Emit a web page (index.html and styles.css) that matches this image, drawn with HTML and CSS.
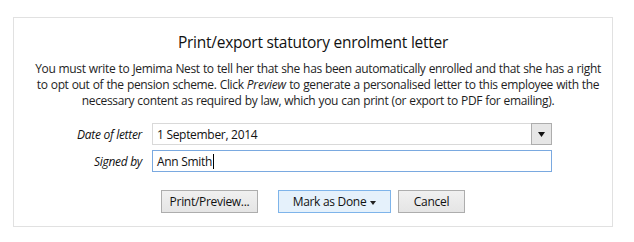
FILE: index.html
```html
<!DOCTYPE html>
<html>
<head>
<meta charset="utf-8">
<link rel="stylesheet" href="styles.css">
</head>
<body>
<div class="panel">
  <h1 class="title">Print/export statutory enrolment letter</h1>
  <p class="intro">You must write to Jemima Nest to tell her that she has been automatically enrolled and that she has a right to opt out of the pension scheme. Click <em>Preview</em> to generate a personalised letter to this employee with the necessary content as required by law, which you can print (or export to PDF for emailing).</p>
  <div class="form">
    <label class="label">Date of letter</label>
    <div class="field select">
      <span class="value">1 September, 2014</span>
      <span class="drop"><svg width="7" height="5" viewBox="0 0 7 5"><path d="M0 0H7L3.5 5Z" fill="#111"/></svg></span>
    </div>
    <label class="label">Signed by</label>
    <div class="field input focus">
      <span class="value">Ann Smith</span><span class="caret"></span>
    </div>
  </div>
  <div class="actions">
    <button class="btn btn-print">Print/Preview...</button>
    <button class="btn btn-primary btn-done">Mark as Done <svg class="arrow" width="6" height="4" viewBox="0 0 6 4"><path d="M0 0H6L3 4Z" fill="#222"/></svg></button>
    <button class="btn btn-cancel">Cancel</button>
  </div>
</div>
</body>
</html>
```

FILE: styles.css
```css
* { box-sizing: border-box; }
html, body { margin: 0; padding: 0; background: #fff; }
body {
  font-family: "Open Sans", "Noto Sans", sans-serif;
  color: #1e1e1e;
}
.panel {
  margin: 17px 0 0 13px;
  width: 600px;
  border: 1px solid #e1e1e1;
  padding: 14px 0 13px 0;
}
.title {
  margin: 0;
  font-size: 15.5px;
  font-weight: normal;
  line-height: 20px;
  text-align: center;
  color: #111;
  letter-spacing: -0.25px;
}
.intro {
  margin: 9px 0 0 0;
  padding: 0 10px 0 20px;
  font-size: 12px;
  line-height: 16px;
  text-align: center;
  letter-spacing: -0.35px;
  word-spacing: 0.4px;
}
.intro em { font-style: italic; letter-spacing: -0.2px; }
.form {
  margin-top: 14px;
  display: grid;
  grid-template-columns: 128px 400px;
  column-gap: 10px;
  row-gap: 5px;
  align-items: center;
}
.label {
  text-align: right;
  font-style: italic;
  font-size: 12px;
  letter-spacing: -0.3px;
  color: #111;
}
.field {
  height: 22px;
  display: flex;
  align-items: center;
  font-size: 12px;
  color: #111;
  letter-spacing: -0.3px;
  border: 1px solid #d9d9d9;
  padding-left: 4px;
}
.select .value { flex: 1; }
.drop {
  width: 21px;
  height: 22px;
  margin: -1px -1px -1px 0;
  border: 1px solid #adadad;
  background: #e6e6e6;
  display: flex;
  align-items: center;
  justify-content: center;
}
.focus { border-color: #7aa9e0; }
.caret {
  display: inline-block;
  width: 1px;
  height: 15px;
  background: #000;
  margin-left: 1px;
}
.actions {
  margin-top: 18px;
  display: flex;
  justify-content: center;
  gap: 7px;
}
.btn {
  height: 23px;
  font-family: "Open Sans", "Noto Sans", sans-serif;
  font-size: 12px;
  letter-spacing: -0.3px;
  color: #111;
  background: linear-gradient(#f0f0f0, #e5e5e5);
  border: 1px solid #adadad;
  padding: 0;
  display: inline-flex;
  align-items: center;
  justify-content: center;
}
.btn-print { width: 97px; margin-right: 13px; }
.btn-done { width: 113px; }
.btn-cancel { width: 67px; }
.btn-primary {
  background: #e5f1fb;
  border-color: #7eb4ea;
}
.arrow { margin-left: 4px; margin-top: 2px; }
```
